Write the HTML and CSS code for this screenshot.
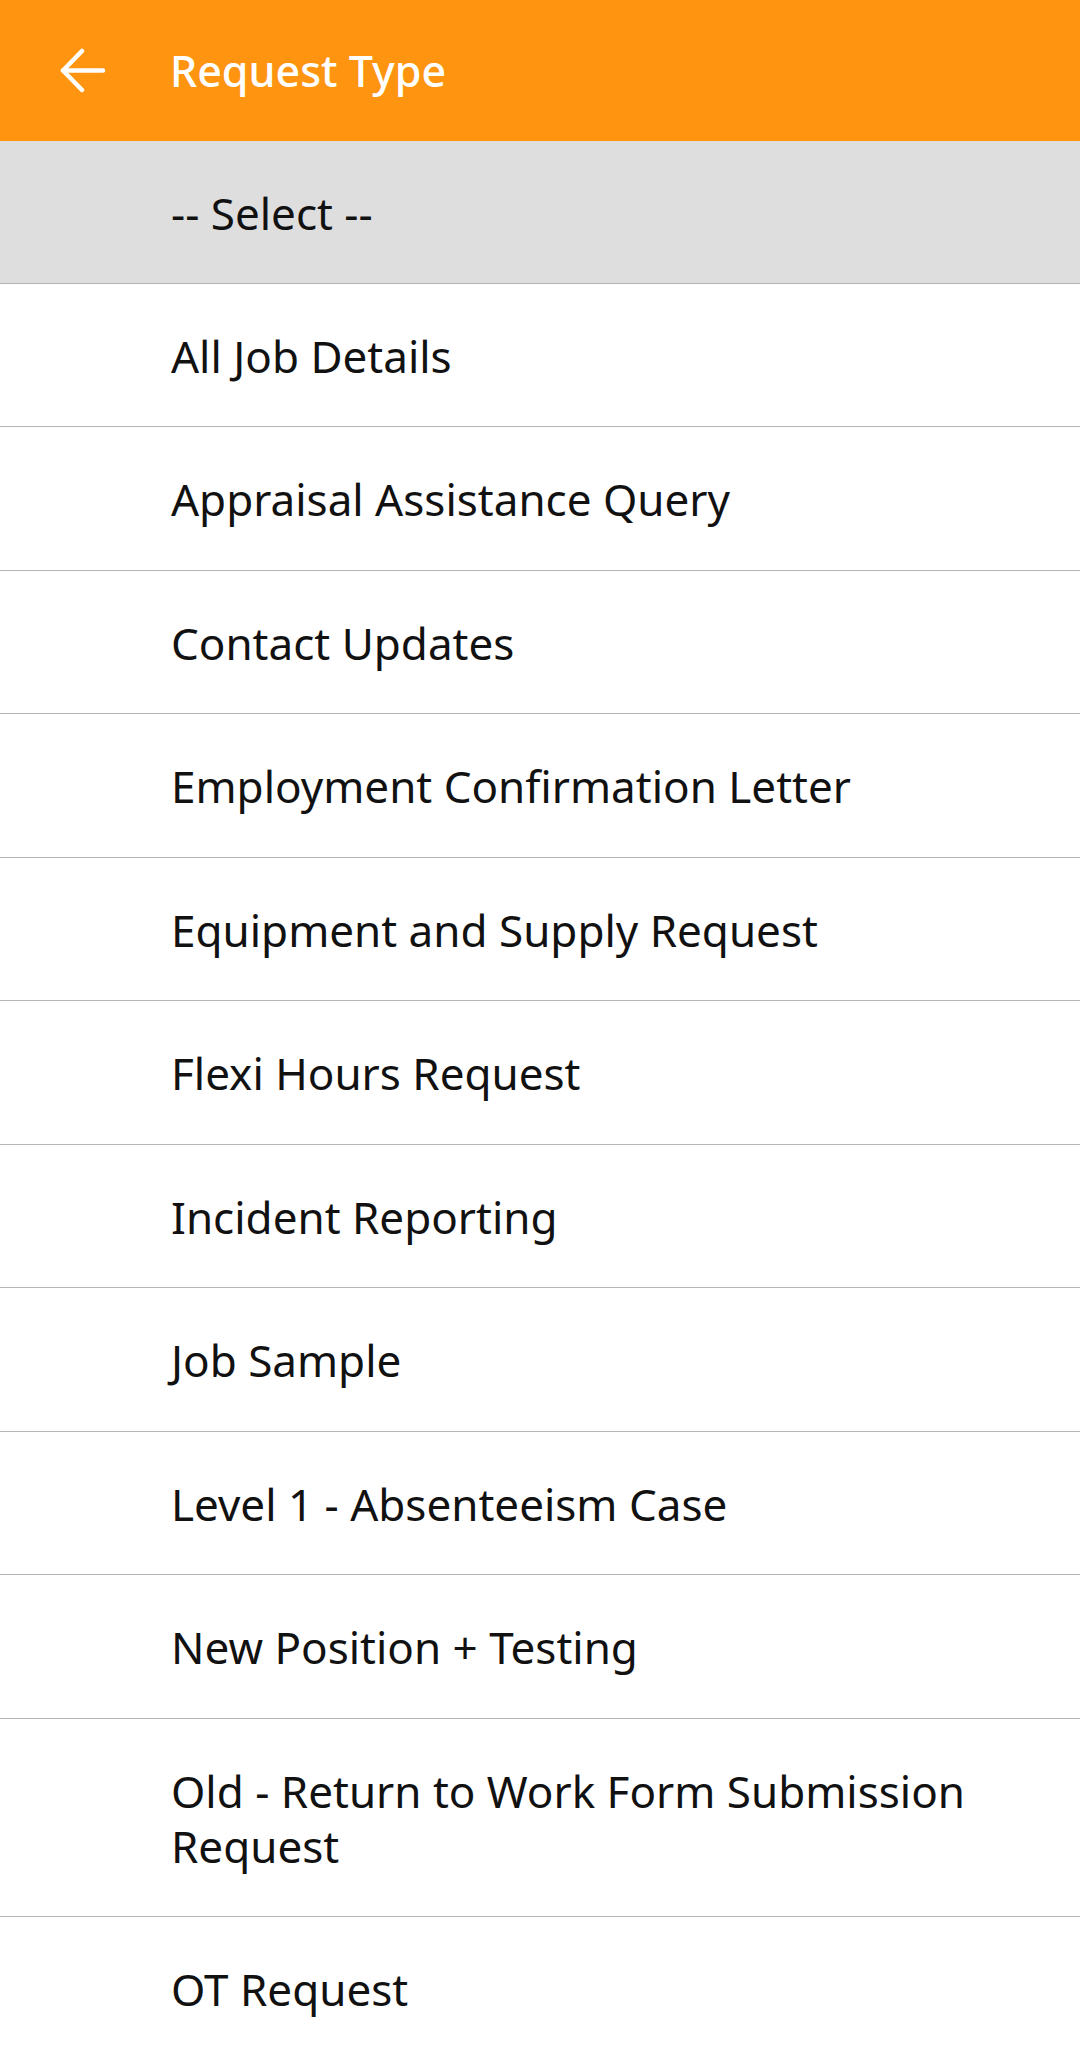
FILE: index.html
```html
<!DOCTYPE html>
<html lang="en">
<head>
  <meta charset="UTF-8">
  <title>Request Type</title>
  <link rel="stylesheet" href="styles.css">
</head>
<body>
  <header class="app-bar">
    <button class="back" type="button" aria-label="Back">
      <svg width="48" height="48" viewBox="0 0 48 48">
        <polyline points="22,4 3,23.5 22,43" fill="none" stroke="#fff" stroke-width="4.5" stroke-linecap="round" stroke-linejoin="round"/>
        <line x1="3" y1="23.5" x2="43" y2="23.5" stroke="#fff" stroke-width="4.5" stroke-linecap="round"/>
      </svg>
    </button>
    <h1 class="title">Request Type</h1>
  </header>

  <ul class="options">
    <li class="option selected">-- Select --</li>
    <li class="option">All Job Details</li>
    <li class="option">Appraisal Assistance Query</li>
    <li class="option">Contact Updates</li>
    <li class="option">Employment Confirmation Letter</li>
    <li class="option">Equipment and Supply Request</li>
    <li class="option">Flexi Hours Request</li>
    <li class="option">Incident Reporting</li>
    <li class="option">Job Sample</li>
    <li class="option">Level 1 - Absenteeism Case</li>
    <li class="option">New Position + Testing</li>
    <li class="option">Old - Return to Work Form Submission Request</li>
    <li class="option">OT Request</li>
  </ul>
</body>
</html>
```

FILE: styles.css
```css
body {
  margin: 0;
  padding: 0;
  font-family: "Noto Sans", Roboto, sans-serif;
  background-color: #ffffff;
  color: #111;
  overflow: hidden;
}

.app-bar {
  display: flex;
  align-items: center;
  height: 141px;
  background-color: #fe9410;
}

.back {
  display: flex;
  align-items: center;
  justify-content: center;
  width: 48px;
  height: 48px;
  margin-left: 60px;
  margin-right: 62px;
  padding: 0;
  border: none;
  background: none;
}

.title {
  margin: 0;
  font-size: 43px;
  font-weight: 500;
  color: #ffffff;
}

.options {
  list-style: none;
  margin: 0;
  padding: 0;
}

.option {
  padding: 45px 40px 42.5px 171px;
  font-size: 44px;
  line-height: 55px;
  border-bottom: 1px solid #b5b5b5;
}

.option.selected {
  background-color: #dedede;
  padding-top: 44.5px;
  padding-bottom: 42px;
}
```
